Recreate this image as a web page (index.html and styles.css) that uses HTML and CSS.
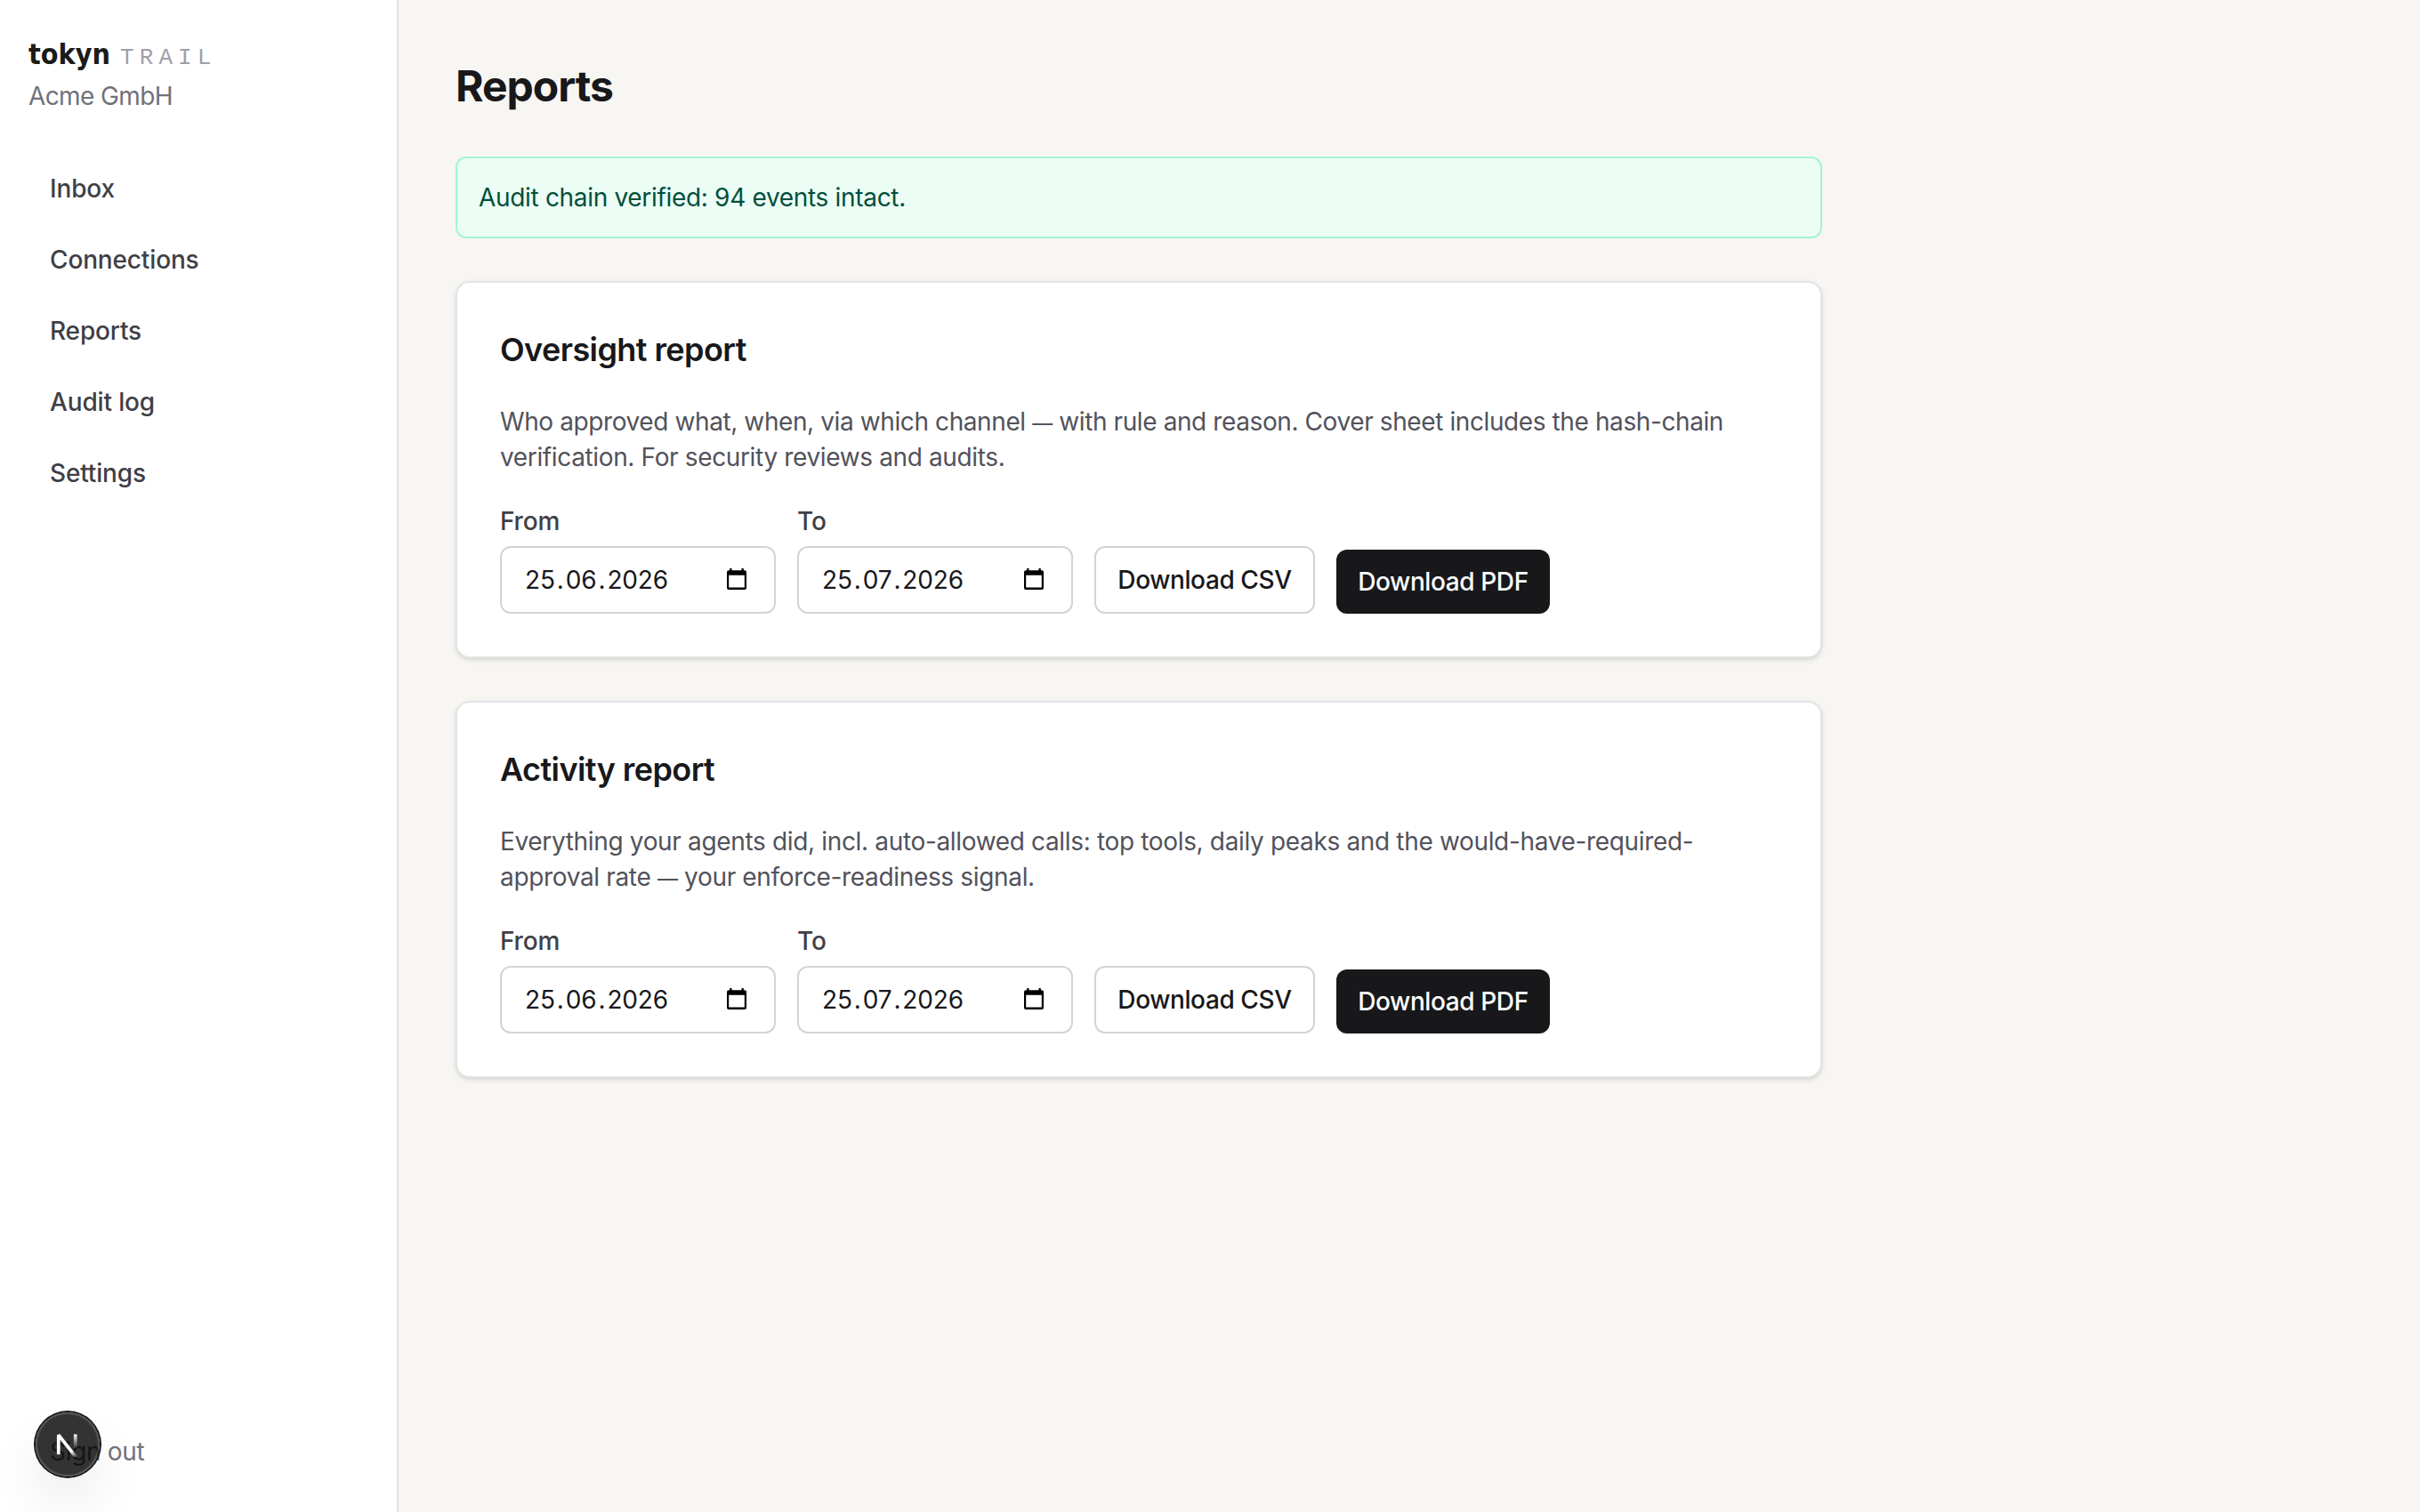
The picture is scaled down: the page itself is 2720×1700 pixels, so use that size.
FILE: index.html
```
<!DOCTYPE html>
<html lang="en">
<head>
<meta charset="utf-8">
<title>Reports – tokyn trail</title>
<link rel="stylesheet" href="styles.css">
</head>
<body>
<svg width="0" height="0" class="defs" aria-hidden="true">
  <symbol id="calendar" viewBox="0 0 22 24">
    <path fill-rule="evenodd" d="M3.2 0h2.3v2.3h11V0h2.3v2.3H20a2 2 0 0 1 2 2V22a2 2 0 0 1-2 2H2a2 2 0 0 1-2-2V4.3a2 2 0 0 1 2-2h1.200zM2.200 7.800V21.600h17.600V7.800z"/>
  </symbol>
</svg>
<div class="app">
  <aside class="sidebar">
    <div class="brand"><span class="brand-name">tokyn</span><span class="brand-product">TRAIL</span></div>
    <div class="org">Acme GmbH</div>
    <nav class="nav">
      <a class="nav-item">Inbox</a>
      <a class="nav-item">Connections</a>
      <a class="nav-item">Reports</a>
      <a class="nav-item">Audit log</a>
      <a class="nav-item">Settings</a>
    </nav>
    <a class="sign-out">Sign out</a>
  </aside>
  <main class="main">
    <h1>Reports</h1>
    <div class="alert">Audit chain verified: 94 events intact.</div>
    <section class="card">
      <h2>Oversight report</h2>
      <p class="oversight-text">Who approved what, when, via which channel <span class="dash">—</span> with rule and reason. Cover sheet includes the hash-chain<br><span class="last-line">verification. For security reviews and audits.</span></p>
      <form class="controls">
        <label class="field"><span>From</span>
          <span class="date"><span class="value"><b>25</b>.<b>06</b>.<b>2026</b></span><svg class="calendar"><use href="#calendar"/></svg></span></label>
        <label class="field"><span>To</span>
          <span class="date"><span class="value"><b>25</b>.<b>07</b>.<b>2026</b></span><svg class="calendar"><use href="#calendar"/></svg></span></label>
        <button type="button" class="btn btn-outline">Download CSV</button>
        <button type="button" class="btn btn-solid">Download PDF</button>
      </form>
    </section>
    <section class="card">
      <h2>Activity report</h2>
      <p class="activity-text">Everything your agents did, incl. auto-allowed calls: top tools, daily peaks and the would-have-required-<br>approval rate <span class="dash">—</span> your enforce-readiness signal.</p>
      <form class="controls">
        <label class="field"><span>From</span>
          <span class="date"><span class="value"><b>25</b>.<b>06</b>.<b>2026</b></span><svg class="calendar"><use href="#calendar"/></svg></span></label>
        <label class="field"><span>To</span>
          <span class="date"><span class="value"><b>25</b>.<b>07</b>.<b>2026</b></span><svg class="calendar"><use href="#calendar"/></svg></span></label>
        <button type="button" class="btn btn-outline">Download CSV</button>
        <button type="button" class="btn btn-solid">Download PDF</button>
      </form>
    </section>
  </main>
</div>
<div class="dev-badge">
  <svg width="28" height="28" viewBox="0 0 14 14" fill="none">
    <defs>
      <linearGradient id="diag" gradientUnits="userSpaceOnUse" x1="9.95" y1="10.6" x2="12.9" y2="14.4"><stop stop-color="#fff"/><stop offset="1" stop-color="#fff" stop-opacity="0"/></linearGradient>
      <linearGradient id="stem" gradientUnits="userSpaceOnUse" x1="11.8" y1="1" x2="11.8" y2="9.4"><stop stop-color="#fff"/><stop offset="1" stop-color="#fff" stop-opacity="0"/></linearGradient>
    </defs>
    <g transform="translate(-.45 0)" stroke-width="1.86">
      <path d="M11.825 1.300V9.400" stroke="url(#stem)"/>
      <path d="M13.300 15.600 2.340 1.700V12.600" stroke="url(#diag)" stroke-linejoin="bevel"/>
    </g>
  </svg>
</div>
</body>
</html>
```
FILE: styles.css
```
* { box-sizing: border-box; }
body {
  margin: 0;
  font: 400 28px/40px Inter, "Liberation Sans", sans-serif;
  color: #18181b;
  background: #f7f6f2;
}
.defs { position: absolute; }
.app { display: flex; height: 100vh; }

.sidebar {
  display: flex;
  flex-direction: column;
  width: 448px;
  padding: 32px;
  background: #fff;
  border-right: 2px solid #e4e4e7;
}
.brand {
  display: flex;
  align-items: baseline;
  height: 56px;
  padding-top: 1px;
  line-height: 56px;
}
.brand-name {
  width: 103px;
  font-family: "DejaVu Sans Condensed", "DejaVu Sans", sans-serif;
  font-stretch: condensed;
  font-size: 32px;
  font-weight: 700;
  color: #1c1b19;
}
.brand-product {
  font-family: "Liberation Mono", monospace;
  font-size: 26px;
  letter-spacing: 6.1px;
  color: #9f9fa9;
}
.org { color: #71717b; letter-spacing: -.6px; }
.nav {
  display: flex;
  flex-direction: column;
  gap: 8px;
  margin-top: 48px;
}
.nav-item {
  padding: 16px 24px;
  font-weight: 500;
  letter-spacing: -.15px;
  color: #3f3f46;
}
.sign-out {
  margin-top: auto;
  padding: 16px 24px;
  color: #71717b;
  letter-spacing: -.3px;
}

.main {
  display: flex;
  flex-direction: column;
  gap: 48px;
  width: 1664px;
  padding: 64px;
}
h1 {
  margin: 0;
  padding-top: 1px;
  height: 64px;
  font-size: 48px;
  line-height: 64px;
  font-weight: 700;
  letter-spacing: -1px;
}
.alert {
  padding: 24px;
  border: 2px solid #a4f4cf;
  border-radius: 12px;
  background: #ecfdf5;
  color: #004f3b;
  letter-spacing: -.32px;
}
.card {
  padding: 48px;
  border: 2px solid #e4e4e7;
  border-radius: 16px;
  background: #fff;
  box-shadow: 0 2px 6px rgba(0, 0, 0, .1), 0 2px 4px -2px rgba(0, 0, 0, .1);
}
h2 {
  margin: 0 0 33px;
  font-size: 36px;
  line-height: 55px;
  font-weight: 600;
  letter-spacing: -.58px;
}
p {
  margin: 0 0 32px;
  color: #52525b;
  white-space: nowrap;
}
.oversight-text { letter-spacing: -.4px; }
.oversight-text .last-line { letter-spacing: -.36px; }
.activity-text { letter-spacing: -.34px; }
p .dash { font-size: 23px; line-height: 1; }

.controls {
  display: flex;
  align-items: flex-end;
  gap: 24px;
}
.field {
  display: flex;
  flex-direction: column;
  gap: 8px;
  font-weight: 500;
  letter-spacing: -.2px;
  color: #3f3f46;
}
.date {
  display: flex;
  align-items: center;
  justify-content: space-between;
  width: 310px;
  height: 76px;
  padding: 0 31px 0 24px;
  border: 2px solid #d4d4d8;
  border-radius: 12px;
  font-weight: 400;
  letter-spacing: -.15px;
  color: #18181b;
}
.date b { padding: 0 2px; font-weight: 400; }
.calendar { width: 22px; height: 24px; margin-bottom: 2px; fill: #000; }
.btn {
  padding: 0;
  font: inherit;
  font-weight: 500;
  letter-spacing: -.4px;
  border: 0;
  border-radius: 12px;
}
.btn-outline {
  width: 248px;
  height: 76px;
  border: 2px solid #d4d4d8;
  background: #fff;
  color: #18181b;
}
.btn-solid {
  width: 240px;
  height: 72px;
  background: #18181b;
  color: #fff;
}

.dev-badge {
  position: fixed;
  left: 40px;
  bottom: 40px;
  display: flex;
  align-items: center;
  justify-content: center;
  width: 72px;
  height: 72px;
  border-radius: 50%;
  background: rgba(0, 0, 0, .8);
  box-shadow: 0 0 0 2px #171717, inset 0 0 0 2px rgba(255, 255, 255, .14), 0 32px 64px -16px rgba(0, 0, 0, .24);
}
```
